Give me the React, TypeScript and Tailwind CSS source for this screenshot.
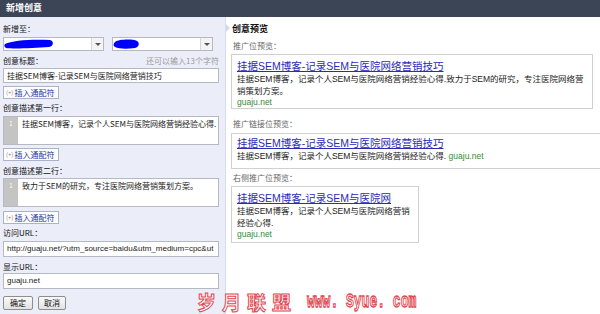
import React from "react";

function Select({ blob }: { blob: React.ReactNode }) {
  return (
    <div className="relative w-[101px] h-[14px] bg-white border border-[#b4b9c4] flex">
      <div className="flex-1 relative overflow-hidden">{blob}</div>
      <div className="w-[12px] h-full border-l border-[#d5d8de] bg-[#f4f4f4] flex items-center justify-center">
        <div className="w-0 h-0 border-l-[3px] border-r-[3px] border-t-[3px] border-l-transparent border-r-transparent border-t-[#555]" />
      </div>
    </div>
  );
}

function InsertBtn() {
  return (
    <div className="w-[56px] h-[13px] bg-white border border-[#aab3c8] flex items-center pl-[2px] gap-[1px]">
      <span className="text-[6px] text-[#888] leading-none">(+)</span>
      <span className="text-[8px] text-[#23369e] leading-none">插入通配符</span>
    </div>
  );
}

function Label({ children }: { children: React.ReactNode }) {
  return <div className="h-[12px] leading-[12px] text-[8px] text-[#111]">{children}</div>;
}

function TextArea({ text }: { text: string }) {
  return (
    <div className="h-[29px] bg-white border border-[#b4b9c4] flex">
      <div className="w-[14px] bg-[#c4c4c4] flex justify-center pt-[3px]">
        <span className="text-[6px] text-white leading-[8px]">1</span>
      </div>
      <div className="pl-[4px] pt-[1px] text-[8px] leading-[12px] text-[#222] whitespace-nowrap">{text}</div>
    </div>
  );
}

function Input({ text, h, latin }: { text: string; h: string; latin?: boolean }) {
  return (
    <div className={`${h} bg-white border border-[#b4b9c4] flex items-center pl-[3px] overflow-hidden`}>
      <span
        className={
          latin
            ? "text-[8px] text-[#222] whitespace-nowrap font-['Liberation_Sans',sans-serif]"
            : "text-[8px] text-[#222] whitespace-nowrap"
        }
      >
        {text}
      </span>
    </div>
  );
}

export default function App() {
  return (
    <div className="w-[600px] h-[314px] overflow-hidden relative bg-white font-['Liberation_Sans','Noto_Sans_CJK_SC',sans-serif] text-[#222]">
      <div className="h-[17px] bg-[#3b4556] flex items-center pl-[6px] text-white font-bold text-[9px]">新增创意</div>
      <div className="flex h-[297px]">
        {/* Left form panel */}
        <div className="w-[226px] shrink-0 bg-[#ebeef9] border-r border-[#d6dcee] pl-[3px] pr-[6px] flex flex-col font-['Noto_Sans_CJK_SC','Liberation_Sans',sans-serif]">
          <div className="mt-[6px]">
            <Label>新增至：</Label>
          </div>
          <div className="mt-[2px] flex gap-[8px]">
            <Select
              blob={
                <svg width="50" height="14" className="absolute left-0 top-0">
                  <path d="M1 6 C8 2, 30 1, 46 2 C50 3, 50 8, 45 9 C30 10, 10 11, 2 10 C0 9, 0 7, 1 6 Z" fill="#0000ff" />
                </svg>
              }
            />
            <Select
              blob={
                <svg width="30" height="14" className="absolute left-0 top-0">
                  <path d="M2 4 C6 1, 20 1, 24 3 C27 5, 26 9, 22 10 C14 11, 6 11, 2 9 C0 8, 0 6, 2 4 Z" fill="#0000ff" />
                </svg>
              }
            />
          </div>
          <div className="mt-[4px] flex justify-between items-center">
            <Label>创意标题：</Label>
            <span className="text-[8px] text-[#999] leading-[12px]">还可以输入13个字符</span>
          </div>
          <div className="mt-[1px]">
            <Input h="h-[15px]" text="挂据SEM博客-记录SEM与医院网络营销技巧" />
          </div>
          <div className="mt-[3px]">
            <InsertBtn />
          </div>
          <div className="mt-[3px]">
            <Label>创意描述第一行：</Label>
          </div>
          <div className="mt-[2px]">
            <TextArea text="挂据SEM博客，记录个人SEM与医院网络营销经验心得." />
          </div>
          <div className="mt-[3px]">
            <InsertBtn />
          </div>
          <div className="mt-[4px]">
            <Label>创意描述第二行：</Label>
          </div>
          <div className="mt-[1px]">
            <TextArea text="致力于SEM的研究，专注医院网络营销策划方案。" />
          </div>
          <div className="mt-[4px]">
            <InsertBtn />
          </div>
          <div className="mt-[3px]">
            <Label>访问URL：</Label>
          </div>
          <div className="mt-[2px]">
            <Input h="h-[16px]" latin text="http://guaju.net/?utm_source=baidu&utm_medium=cpc&ut" />
          </div>
          <div className="mt-[4px]">
            <Label>显示URL：</Label>
          </div>
          <div>
            <Input h="h-[16px]" latin text="guaju.net" />
          </div>
          <div className="mt-[7px] flex gap-[5px]">
            <div className="w-[30px] h-[14px] border border-[#8e8e8e] rounded-[2px] bg-gradient-to-b from-[#fafafa] to-[#e2e2e2] flex items-center justify-center text-[8px] text-[#111]">确定</div>
            <div className="w-[28px] h-[14px] border border-[#8e8e8e] rounded-[2px] bg-gradient-to-b from-[#fafafa] to-[#e2e2e2] flex items-center justify-center text-[8px] text-[#111]">取消</div>
          </div>
        </div>

        {/* Right preview panel */}
        <div className="flex-1 relative pl-[5px] flex flex-col">
          <div className="absolute left-0 top-[7px] w-0 h-0 border-t-[4px] border-b-[4px] border-l-[4px] border-t-transparent border-b-transparent border-l-[#d4daea]" />
          <div className="mt-[6px] pl-[1px] h-[12px] leading-[12px] text-[9px] font-bold text-[#111]">创意预览</div>
          <div className="mt-[6px] pl-[2px] h-[12px] leading-[12px] text-[8px] text-[#666]">推广位预览：</div>
          <div className="mt-[1px] w-[362px] h-[55px] border border-[#d0d0d0] pl-[5px] pt-[4px]">
            <div className="text-[10.5px] leading-[14px] text-[#2b2bb8] underline whitespace-nowrap">挂据SEM博客-记录SEM与医院网络营销技巧</div>
            <div className="text-[8.5px] leading-[12px] text-[#222] whitespace-nowrap">挂据SEM博客，记录个人SEM与医院网络营销经验心得.致力于SEM的研究，专注医院网络营</div>
            <div className="text-[8.5px] leading-[12px] text-[#222] whitespace-nowrap">销策划方案。</div>
            <div className="text-[8.5px] leading-[11px] text-[#3b8a3b]">guaju.net</div>
          </div>
          <div className="mt-[10px] pl-[2px] h-[12px] leading-[12px] text-[8px] text-[#666]">推广链接位预览：</div>
          <div className="mt-[2px] w-[380px] h-[36px] border border-[#d0d0d0] pl-[5px] pt-[2px]">
            <div className="text-[10.5px] leading-[14px] text-[#2b2bb8] underline whitespace-nowrap">挂据SEM博客-记录SEM与医院网络营销技巧</div>
            <div className="text-[8.5px] leading-[12px] text-[#222] whitespace-nowrap">
              挂据SEM博客，记录个人SEM与医院网络营销经验心得.<span className="text-[#3b8a3b]"> guaju.net</span>
            </div>
          </div>
          <div className="mt-[4px] pl-[2px] h-[12px] leading-[12px] text-[8px] text-[#666]">右侧推广位预览：</div>
          <div className="mt-[1px] w-[188px] h-[57px] border border-[#d0d0d0] pl-[5px] pt-[4px]">
            <div className="text-[10.5px] leading-[14px] text-[#2b2bb8] underline whitespace-nowrap">挂据SEM博客-记录SEM与医院网</div>
            <div className="text-[8.5px] leading-[12px] text-[#222] whitespace-nowrap">挂据SEM博客，记录个人SEM与医院网络营销</div>
            <div className="text-[8.5px] leading-[12px] text-[#222] whitespace-nowrap">经验心得.</div>
            <div className="text-[8.5px] leading-[11px] text-[#3b8a3b]">guaju.net</div>
          </div>
        </div>
      </div>

      {/* Watermark */}
      <div className="absolute left-[197px] top-[292px] flex items-center pointer-events-none">
        <span className="text-[19px] leading-[20px] tracking-[6px] font-bold text-white [-webkit-text-stroke:1px_#e0474f] font-['Noto_Sans_CJK_SC',sans-serif]">岁月联盟</span>
        <span className="ml-[10px] text-[13px] leading-[20px] font-bold text-white [-webkit-text-stroke:0.8px_#e0474f] font-['Liberation_Mono',monospace] scale-y-[1.6] whitespace-nowrap">www. Syue. com</span>
      </div>
    </div>
  );
}
